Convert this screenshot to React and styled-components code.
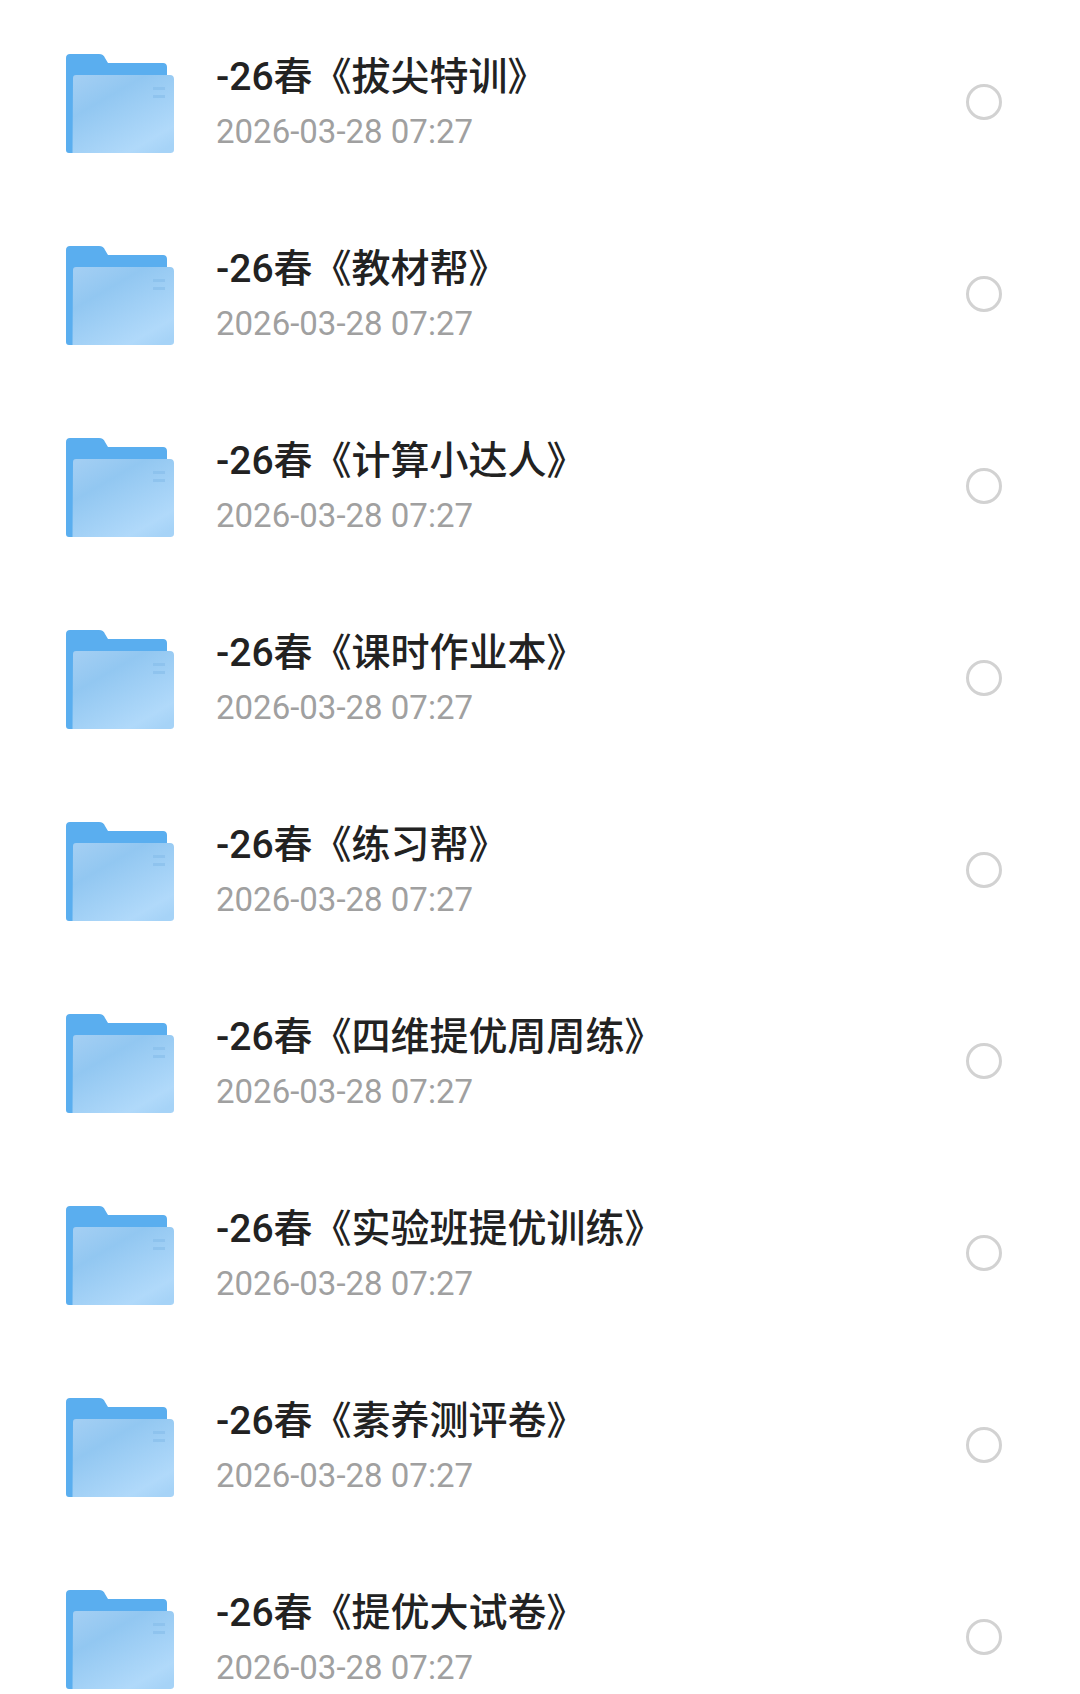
import React from "react";
import styled, { createGlobalStyle } from "styled-components";

const GlobalStyle = createGlobalStyle`
  html, body {
    margin: 0;
    padding: 0;
    background: #fff;
    height: 1694px;
    overflow: hidden;
  }
`;

const List = styled.div`
  display: flex;
  flex-direction: column;
  width: 1080px;
  padding-top: 6px;
  font-family: Roboto, "Noto Sans CJK SC", sans-serif;
`;

const Row = styled.div`
  display: flex;
  align-items: center;
  height: 191.9px;
  flex-shrink: 0;
  padding: 0 78px 0 66px;
  box-sizing: border-box;
`;

const FolderIcon = styled.svg`
  width: 108px;
  height: 99px;
  margin-top: 4px;
  flex-shrink: 0;
  filter: blur(0.5px);
`;

const Info = styled.div`
  flex: 1;
  margin: 3px 0 0 42px;
  display: flex;
  flex-direction: column;
  gap: 10px;
`;

const Title = styled.div`
  font-size: 39px;
  font-weight: 500;
  line-height: 48px;
  color: #222;
  white-space: nowrap;
`;

const DateText = styled.div`
  font-size: 33px;
  line-height: 42px;
  color: #a0a0a0;
`;

const Radio = styled.div`
  width: 36px;
  height: 36px;
  box-sizing: border-box;
  border: 3px solid #d2d2d2;
  border-radius: 50%;
  flex-shrink: 0;
`;

const names = [
  "拔尖特训",
  "教材帮",
  "计算小达人",
  "课时作业本",
  "练习帮",
  "四维提优周周练",
  "实验班提优训练",
  "素养测评卷",
  "提优大试卷",
];

const Folder = ({ id }) => (
  <FolderIcon viewBox="0 0 108 99">
    <defs>
      <linearGradient id={id} x1="0.1" y1="0" x2="0.85" y2="1">
        <stop offset="0" stopColor="#a2cef3" />
        <stop offset="0.3" stopColor="#92c7f1" />
        <stop offset="0.85" stopColor="#b0d9fa" />
        <stop offset="1" stopColor="#a6d3f7" />
      </linearGradient>
    </defs>
    <path
      d="M4 0H33C36 0 38 1.500 39 4L42 9H97C99.500 9 101 10.500 101 13V95C101 97.500 99.500 99 97 99H3C1 99 0 98 0 96V4C0 1.500 1.500 0 4 0Z"
      fill="#5aaeef"
    />
    <path
      d="M10 21H104C106.500 21 108 22.500 108 25V96C108 98 106.500 99 104.500 99H6.500L7 24C7 22 8 21 10 21Z"
      fill={`url(#${id})`}
    />
    <rect x="87" y="33" width="12" height="3" fill="#86bde9" opacity="0.6" />
    <rect x="87" y="41" width="12" height="3" fill="#86bde9" opacity="0.6" />
  </FolderIcon>
);

export default function App() {
  return (
    <>
      <GlobalStyle />
      <List>
        {names.map((name, i) => (
          <Row key={name}>
            <Folder id={`folder-front-${i}`} />
            <Info>
              <Title>-26春《{name}》</Title>
              <DateText>2026-03-28 07:27</DateText>
            </Info>
            <Radio />
          </Row>
        ))}
      </List>
    </>
  );
}
